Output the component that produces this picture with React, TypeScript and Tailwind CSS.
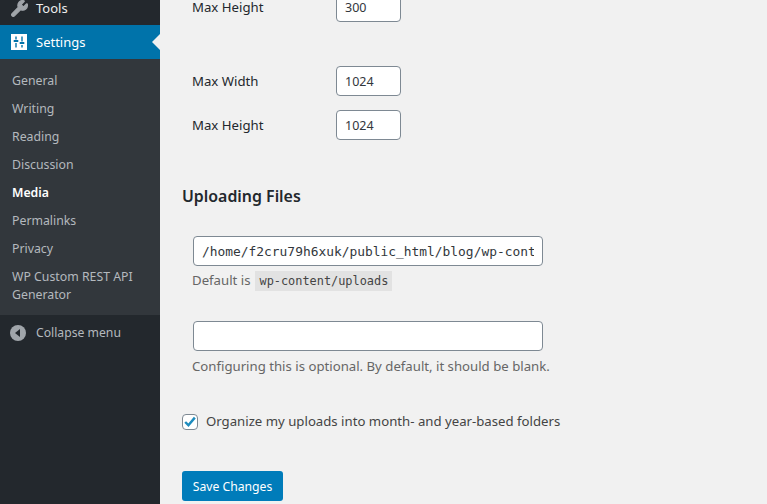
import { Wrench } from "lucide-react";

const sans = "font-['Noto_Sans','Open_Sans',sans-serif]";

const submenu = ["General", "Writing", "Reading", "Discussion", "Media", "Permalinks", "Privacy"];

function SizeField({ label, value, className }: { label: string; value: string; className?: string }) {
  return (
    <div className={`flex items-center ${className ?? ""}`}>
      <label className="w-[144px] text-[13.2px] leading-[14px] text-[#23282d]">{label}</label>
      <input
        readOnly
        value={value}
        className="h-[30px] w-[65px] rounded-[4px] border border-[#7e8993] bg-white px-2 text-[12.5px] text-[#32373c]"
      />
    </div>
  );
}

function Sidebar() {
  return (
    <aside className="flex w-[160px] shrink-0 flex-col bg-[#23282d] text-[13px]">
      <div className="-mt-[8px] flex h-[33px] items-center text-[#eeeeee]">
        <Wrench className="ml-[10px] h-[19px] w-[19px] fill-[#a0a5aa] text-[#a0a5aa]" strokeWidth={1.5} />
        <span className="ml-[7px]">Tools</span>
      </div>
      <div className="relative flex h-[34px] items-center bg-[#0073aa] text-white">
        <svg viewBox="0 0 16 16" className="ml-[11px] h-[16px] w-[16px]">
          <rect width="16" height="16" fill="#ffffff" />
          <path d="M5 2.5v3M5 9v4.5M11 2.5v5M11 11v2.5" stroke="#0073aa" strokeWidth="1.4" />
          <path d="M2.7 7h4.6M8.7 9h4.6" stroke="#0073aa" strokeWidth="1.8" />
        </svg>
        <span className="ml-[9px] pt-[2px]">Settings</span>
        <div className="absolute right-0 top-[9px] h-0 w-0 border-y-[8px] border-r-[8px] border-y-transparent border-r-[#f1f1f1]" />
      </div>
      <nav className="flex flex-col bg-[#32373c] pb-[7px] pt-[7px] text-[12.3px] text-[#b4b9be]">
        {submenu.map((item) => (
          <div
            key={item}
            className={`flex h-[28px] items-center px-3 pt-[2px] ${item === "Media" ? "font-semibold text-white" : ""}`}
          >
            {item}
          </div>
        ))}
        <div className="px-3 pb-[4px] pt-[6px] leading-[18px]">WP Custom REST API Generator</div>
      </nav>
      <div className="flex h-[34px] items-center pt-[2px] text-[12.2px] text-[#b4b9be]">
        <svg viewBox="0 0 16 16" className="ml-[10px] h-[16px] w-[16px]">
          <circle cx="8" cy="8" r="8" fill="#a0a5aa" />
          <path d="M10 4v8L5 8z" fill="#23282d" />
        </svg>
        <span className="ml-[10px]">Collapse menu</span>
      </div>
    </aside>
  );
}

export default function App() {
  return (
    <div className={`flex h-[504px] w-[767px] overflow-hidden bg-[#f1f1f1] ${sans}`}>
      <Sidebar />
      <main className="flex-1 pl-[22px] text-[13.2px] text-[#444444]">
        <div className="pl-[10px]">
          <SizeField label="Max Height" value="300" className="-mt-[8px]" />
          <SizeField label="Max Width" value="1024" className="mt-[44px]" />
          <SizeField label="Max Height" value="1024" className="mt-[14px]" />
        </div>

        <h2 className="mt-[45px] text-[15.9px] font-semibold leading-[22px] text-[#23282d]">Uploading Files</h2>

        <div className="pl-[11px]">
          <input
            readOnly
            value="/home/f2cru79h6xuk/public_html/blog/wp-content/uploads"
            className="mt-[29px] block h-[30px] w-[350px] rounded-[4px] border border-[#7e8993] bg-white px-2 font-['DejaVu_Sans_Mono',monospace] text-[12.9px] text-[#32373c]"
          />
          <p className="-ml-px mt-[5px] flex h-[20px] items-center text-[#666666]">
            Default is
            <code className="ml-[5px] bg-[#e2e2e2] px-[4px] py-[1px] font-['DejaVu_Sans_Mono',monospace] text-[11.9px] leading-[18px] text-[#444444]">
              wp-content/uploads
            </code>
          </p>
          <input
            readOnly
            value=""
            className="mt-[30px] block h-[30px] w-[350px] rounded-[4px] border border-[#7e8993] bg-white px-2 text-[14px]"
          />
          <p className="-ml-px mt-[5px] leading-[20px] text-[#666666]">Configuring this is optional. By default, it should be blank.</p>
        </div>

        <label className="mt-[36px] flex items-center text-[#444444]">
          <span className="flex h-[16px] w-[16px] items-center justify-center rounded-[4px] border border-[#7e8993] bg-white">
            <svg viewBox="0 0 16 16" className="h-[14px] w-[14px]">
              <path d="M2.5 8l3.7 3.7L13.5 3" fill="none" stroke="#1e8cbe" strokeWidth="2.8" />
            </svg>
          </span>
          <span className="ml-[8px]">Organize my uploads into month- and year-based folders</span>
        </label>

        <button className="mt-[39px] block h-[30px] w-[101px] rounded-[3px] bg-[#007cba] pt-[2px] text-[12.2px] text-white">
          Save Changes
        </button>
      </main>
    </div>
  );
}
